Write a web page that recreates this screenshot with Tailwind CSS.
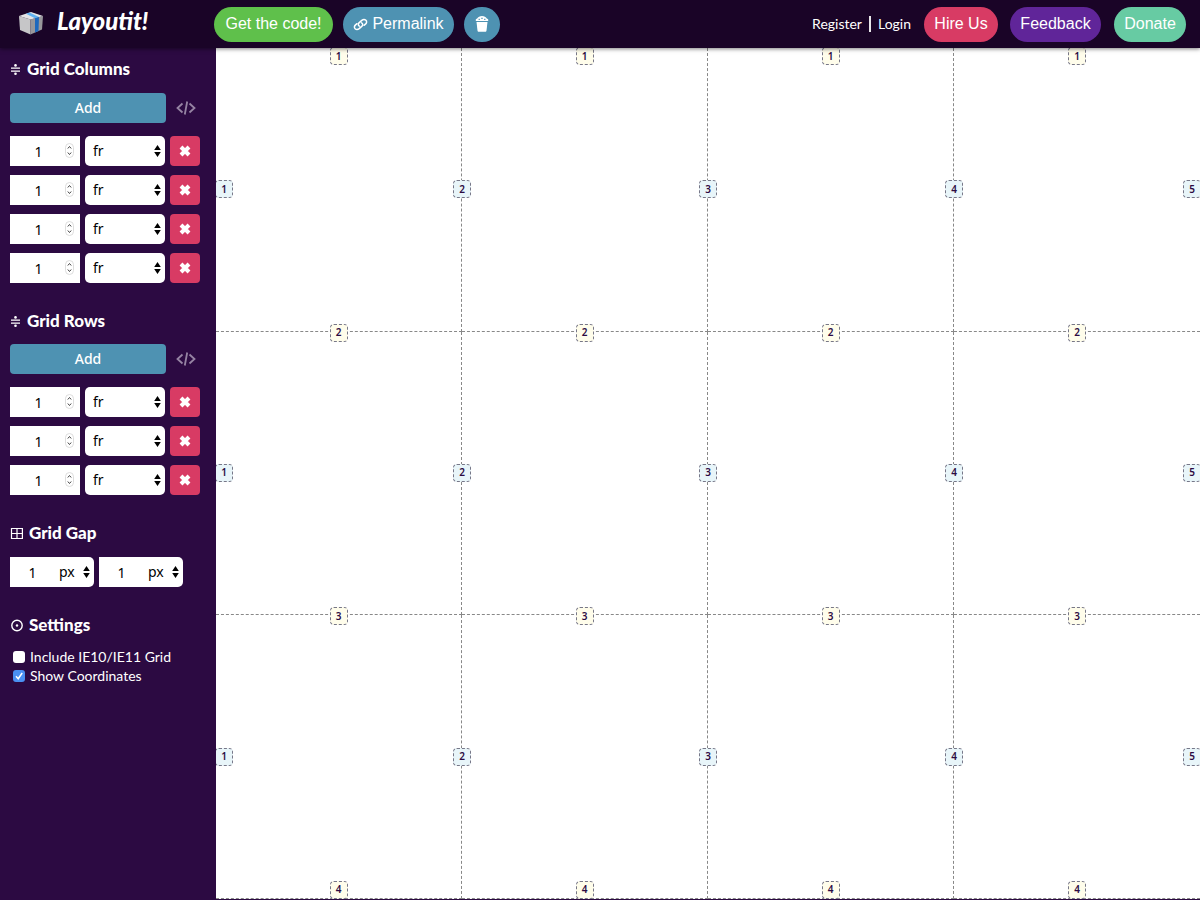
<!DOCTYPE html>
<html lang="en">
<head>
    <meta charset="UTF-8">
    <meta name="viewport" content="width=device-width, initial-scale=1.0">
    <title>Layoutit! - CSS Grid Generator</title>
    <script src="https://cdn.jsdelivr.net/npm/@tailwindcss/browser@4"></script>
</head>
<body class="flex flex-col h-screen overflow-hidden bg-[#2c0a42] text-white font-[Lato,sans-serif]">
    <header class="relative z-10 flex items-center h-12 shrink-0 pl-[18px] pr-[14px] bg-[#1a0427] shadow-[0_1px_4px_rgba(0,0,0,0.5)]">
        <a href="#" class="flex items-center w-[196px] shrink-0">
            <svg class="w-[26px] h-6 mb-[2px]" viewBox="0 0 26 24" aria-hidden="true">
                <path d="M1 5 12.500 8.500V23.500L2 19Z" fill="#c6c6c8"/>
                <path d="M12.500 8.500 25 5 24 18.500 12.500 23.500Z" fill="#97979b"/>
                <path d="M1 5 13 1 25 5 12.500 8.500Z" fill="#e4e5e7"/>
                <path d="M8 2.700 11.500 1.500 21 6 17 7.300Z" fill="#5fb2f2"/>
                <path d="M17 7.300 21 6 20.500 20 17 21.500Z" fill="#1d68bd"/>
            </svg>
            <span class="ml-[13px] mb-[6px] text-2xl font-black italic">Layoutit!</span>
        </a>

        <div class="flex items-center gap-[10px] font-['Liberation_Sans',sans-serif]">
            <button class="w-[119px] h-[35px] rounded-full bg-[#5fc04b]">Get the code!</button>
            <button class="flex items-center justify-center gap-1 w-[111px] h-[35px] rounded-full bg-[#4e92b2]">
                <svg class="w-[15px] h-[15px]" viewBox="0 0 15 15" fill="none" stroke="currentColor" stroke-width="1.500" stroke-linecap="round" aria-hidden="true">
                    <path d="M6.400 9.200C5 8.400 5 6.900 6 5.900L8.800 3.400C9.900 2.500 11.800 2.300 12.900 3.300 14 4.300 13.700 5.900 12.700 6.900L11 8.300"/>
                    <path d="M8.600 5.800C10 6.600 10 8.100 9 9.100L6.200 11.600C5.100 12.500 3.200 12.700 2.100 11.700 1 10.700 1.300 9.100 2.300 8.100L4 6.700"/>
                </svg>
                Permalink
            </button>
            <button aria-label="Clear grid" class="flex items-center justify-center w-9 h-[35px] rounded-full bg-[#4e92b2]">
                <svg class="w-[14px] h-[18px]" viewBox="0 0 14 18" aria-hidden="true">
                    <path d="M1.500 7H12.500L11.500 15.500C11.400 16.300 11 16.800 10.200 16.800H3.800C3 16.800 2.600 16.300 2.500 15.500Z" fill="currentColor"/>
                    <path d="M.8 6V4.600C.8 4 1.500 3.600 2.200 3.400 3 2 4.800 1 7 1S11 2 11.800 3.400C12.500 3.600 13.200 4 13.200 4.600V6Z" fill="currentColor"/>
                    <path d="M3.500 4.300H5M6.200 3.300H7.800M9 4.300H10.500" stroke="#4e92b2" stroke-width="1"/>
                </svg>
            </button>
        </div>

        <div class="flex items-center ml-auto font-['Liberation_Sans',sans-serif]">
            <nav class="flex items-center gap-[7px] mr-[13px] font-[Lato,sans-serif] text-sm">
                <a href="#">Register</a>
                <span class="w-[2px] h-4 bg-white/90"></span>
                <a href="#">Login</a>
            </nav>
            <button class="w-[74px] h-[35px] mr-3 rounded-full bg-[#d83b64]">Hire Us</button>
            <button class="w-[91px] h-[35px] mr-[13px] rounded-full bg-[#602599]">Feedback</button>
            <button class="w-[72px] h-[35px] rounded-full bg-[#67cba3]">Donate</button>
        </div>
    </header>

    <div class="flex flex-1 min-h-0">
        <aside class="w-[216px] shrink-0 px-[10px] pt-[9px]">
            <!-- Columns -->
            <section class="mb-[26px]">
                <h2 class="flex items-center gap-[6px] h-6 mb-3 text-[17px] font-black">
                    <svg class="w-[11px] h-[11px]" viewBox="0 0 11 11" fill="currentColor" aria-hidden="true">
                        <path d="M1 3.400H10V4.800H1ZM1 6.400H10V7.800H1Z"/><circle cx="5.500" cy="1.400" r="1.300"/><circle cx="5.500" cy="9.700" r="1.300"/>
                    </svg>
                    Grid Columns
                </h2>
                <div class="flex items-center mb-[13px]">
                    <button class="w-[156px] h-[30px] rounded-sm bg-[#4e92b2] text-sm font-medium font-['Noto_Sans',sans-serif]">Add</button>
                    <button aria-label="Edit columns as code" class="ml-[10px] text-[#9684a3]">
                        <svg class="w-5 h-[14px]" viewBox="0 0 20 14" fill="none" stroke="currentColor" stroke-width="1.800" aria-hidden="true"><path d="M6.500 2.500 1.500 7 6.500 11.500M13.500 2.500 18.500 7 13.500 11.500M11.200 .5 8.800 13.500"/></svg>
                    </button>
                </div>
                <div id="columns" class="flex flex-col gap-[9px]"></div>
            </section>

            <!-- Rows -->
            <section class="mb-[26px]">
                <h2 class="flex items-center gap-[6px] h-6 mb-[11px] text-[17px] font-black">
                    <svg class="w-[11px] h-[11px]" viewBox="0 0 11 11" fill="currentColor" aria-hidden="true">
                        <path d="M1 3.400H10V4.800H1ZM1 6.400H10V7.800H1Z"/><circle cx="5.500" cy="1.400" r="1.300"/><circle cx="5.500" cy="9.700" r="1.300"/>
                    </svg>
                    Grid Rows
                </h2>
                <div class="flex items-center mb-[13px]">
                    <button class="w-[156px] h-[30px] rounded-sm bg-[#4e92b2] text-sm font-medium font-['Noto_Sans',sans-serif]">Add</button>
                    <button aria-label="Edit rows as code" class="ml-[10px] text-[#9684a3]">
                        <svg class="w-5 h-[14px]" viewBox="0 0 20 14" fill="none" stroke="currentColor" stroke-width="1.800" aria-hidden="true"><path d="M6.500 2.500 1.500 7 6.500 11.500M13.500 2.500 18.500 7 13.500 11.500M11.200 .5 8.800 13.500"/></svg>
                    </button>
                </div>
                <div id="rows" class="flex flex-col gap-[9px]"></div>
            </section>

            <!-- Gap -->
            <section class="mb-[26px]">
                <h2 class="flex items-center gap-[6px] h-6 mb-3 text-[17px] font-black">
                    <svg class="w-[13px] h-[13px]" viewBox="0 0 13 13" fill="none" stroke="currentColor" stroke-width="1.200" aria-hidden="true"><path d="M1.500 1.500H12.400V11.500H1.500ZM7 1.500V11.500M1.500 6.500H12.400"/></svg>
                    Grid Gap
                </h2>
                <div id="gaps" class="flex gap-[5px]"></div>
            </section>

            <!-- Settings -->
            <section>
                <h2 class="flex items-center gap-[6px] h-6 mb-[10px] text-[17px] font-black">
                    <svg class="w-[13px] h-[13px]" viewBox="0 0 13 13" aria-hidden="true"><circle cx="7" cy="6.500" r="5.200" fill="none" stroke="currentColor" stroke-width="1.400"/><circle cx="7" cy="6.500" r="1.200" fill="currentColor"/></svg>
                    Settings
                </h2>
                <label class="flex items-center gap-[5px] h-[19px] pl-[3px] text-sm">
                    <input type="checkbox" class="appearance-none w-3 h-3 rounded-[3px] bg-white">
                    Include IE10/IE11 Grid
                </label>
                <label class="relative flex items-center gap-[5px] h-[19px] pl-[3px] text-sm">
                    <input type="checkbox" checked class="appearance-none w-3 h-3 rounded-[3px] bg-white checked:bg-[#4a90f2]">
                    <svg class="absolute left-[3px] w-3 h-3" viewBox="0 0 12 12" fill="none" stroke="white" stroke-width="1.500" aria-hidden="true"><path d="M3 6.300 5.200 8.800 9.200 3"/></svg>
                    Show Coordinates
                </label>
            </section>
        </aside>

        <main id="grid" class="grid grid-cols-4 grid-rows-3 flex-1 mb-px overflow-hidden bg-white"></main>
    </div>

    <script>
        const columns = 4;
        const rows = 3;

        const arrows = '<svg class="absolute right-1 top-2 w-[7px] h-[14px] pointer-events-none" viewBox="0 0 7 14" aria-hidden="true"><path d="M3.500 1 6.800 6H.2ZM3.500 13 .2 8H6.800Z" fill="black"/></svg>';
        const stepper = '<svg class="absolute right-[6px] top-[7px] w-[9px] h-[15px] pointer-events-none" viewBox="0 0 9 15" fill="none" aria-hidden="true"><rect x=".5" y=".5" width="8" height="14" rx="4" stroke="#dddddd"/><path d="M2.800 5.500 4.500 3.500 6.200 5.500M2.800 9.500 4.500 11.500 6.200 9.500" stroke="#444444"/></svg>';

        // One size + unit line for a column or a row
        function trackRow(kind, i) {
            return `
                <div class="flex gap-[5px] text-sm text-black font-['Noto_Sans',sans-serif]">
                    <div class="relative">
                        <input type="number" value="1" aria-label="${kind} ${i} size" class="block w-[70px] h-[30px] pr-[13px] bg-white text-center [appearance:textfield] [&::-webkit-inner-spin-button]:appearance-none">
                        ${stepper}
                    </div>
                    <div class="relative">
                        <select aria-label="${kind} ${i} unit" class="block appearance-none w-20 h-[30px] pl-2 rounded-[5px] bg-white">
                            <option>fr</option><option>px</option><option>%</option>
                        </select>
                        ${arrows}
                    </div>
                    <button aria-label="Remove ${kind} ${i}" class="flex items-center justify-center w-[30px] h-[30px] rounded-sm bg-[#d83b64]">
                        <svg class="w-3 h-3" viewBox="0 0 12 12" aria-hidden="true"><path d="M2 2 10 10M10 2 2 10" stroke="white" stroke-width="4"/></svg>
                    </button>
                </div>`;
        }

        function gapField(kind) {
            return `
                <div class="relative flex text-sm text-black font-['Noto_Sans',sans-serif]">
                    <input type="number" value="1" aria-label="${kind} gap" class="w-[45px] h-[30px] bg-white text-center [appearance:textfield] [&::-webkit-inner-spin-button]:appearance-none">
                    <select aria-label="${kind} gap unit" class="appearance-none w-[39px] h-[30px] pl-1 rounded-r-[5px] bg-white">
                        <option>px</option><option>%</option>
                    </select>
                    ${arrows}
                </div>`;
        }

        const badge = "absolute flex items-center justify-center w-[18px] h-[18px] border border-dashed border-[#777788] rounded-[4px] text-[10px] font-semibold text-[#2c0a42] font-['Noto_Sans',sans-serif]";

        function cell(col, row) {
            let html = '';
            // column line numbers
            html += `<span class="${badge} bg-[#e8f5f9] top-1/2 -translate-y-1/2 ${col === 1 ? '-left-px' : '-left-[9px]'}">${col}</span>`;
            if (col === columns) {
                html += `<span class="${badge} bg-[#e8f5f9] top-1/2 -translate-y-1/2 -right-px">${col + 1}</span>`;
            }
            // row line numbers
            html += `<span class="${badge} bg-[#fffdeb] left-1/2 -translate-x-1/2 ${row === 1 ? '-top-px' : '-top-2'}">${row}</span>`;
            if (row === rows) {
                html += `<span class="${badge} bg-[#fffdeb] left-1/2 -translate-x-1/2 -bottom-px">${row + 1}</span>`;
            }
            const right = col < columns ? 'border-r' : '';
            return `<div class="relative border-b border-dashed border-[#888888] ${right}">${html}</div>`;
        }

        for (let i = 1; i <= columns; i++) {
            document.getElementById('columns').innerHTML += trackRow('Column', i);
        }
        for (let i = 1; i <= rows; i++) {
            document.getElementById('rows').innerHTML += trackRow('Row', i);
        }
        document.getElementById('gaps').innerHTML = gapField('Column') + gapField('Row');

        let cells = '';
        for (let r = 1; r <= rows; r++) {
            for (let c = 1; c <= columns; c++) {
                cells += cell(c, r);
            }
        }
        document.getElementById('grid').innerHTML = cells;
    </script>
</body>
</html>
